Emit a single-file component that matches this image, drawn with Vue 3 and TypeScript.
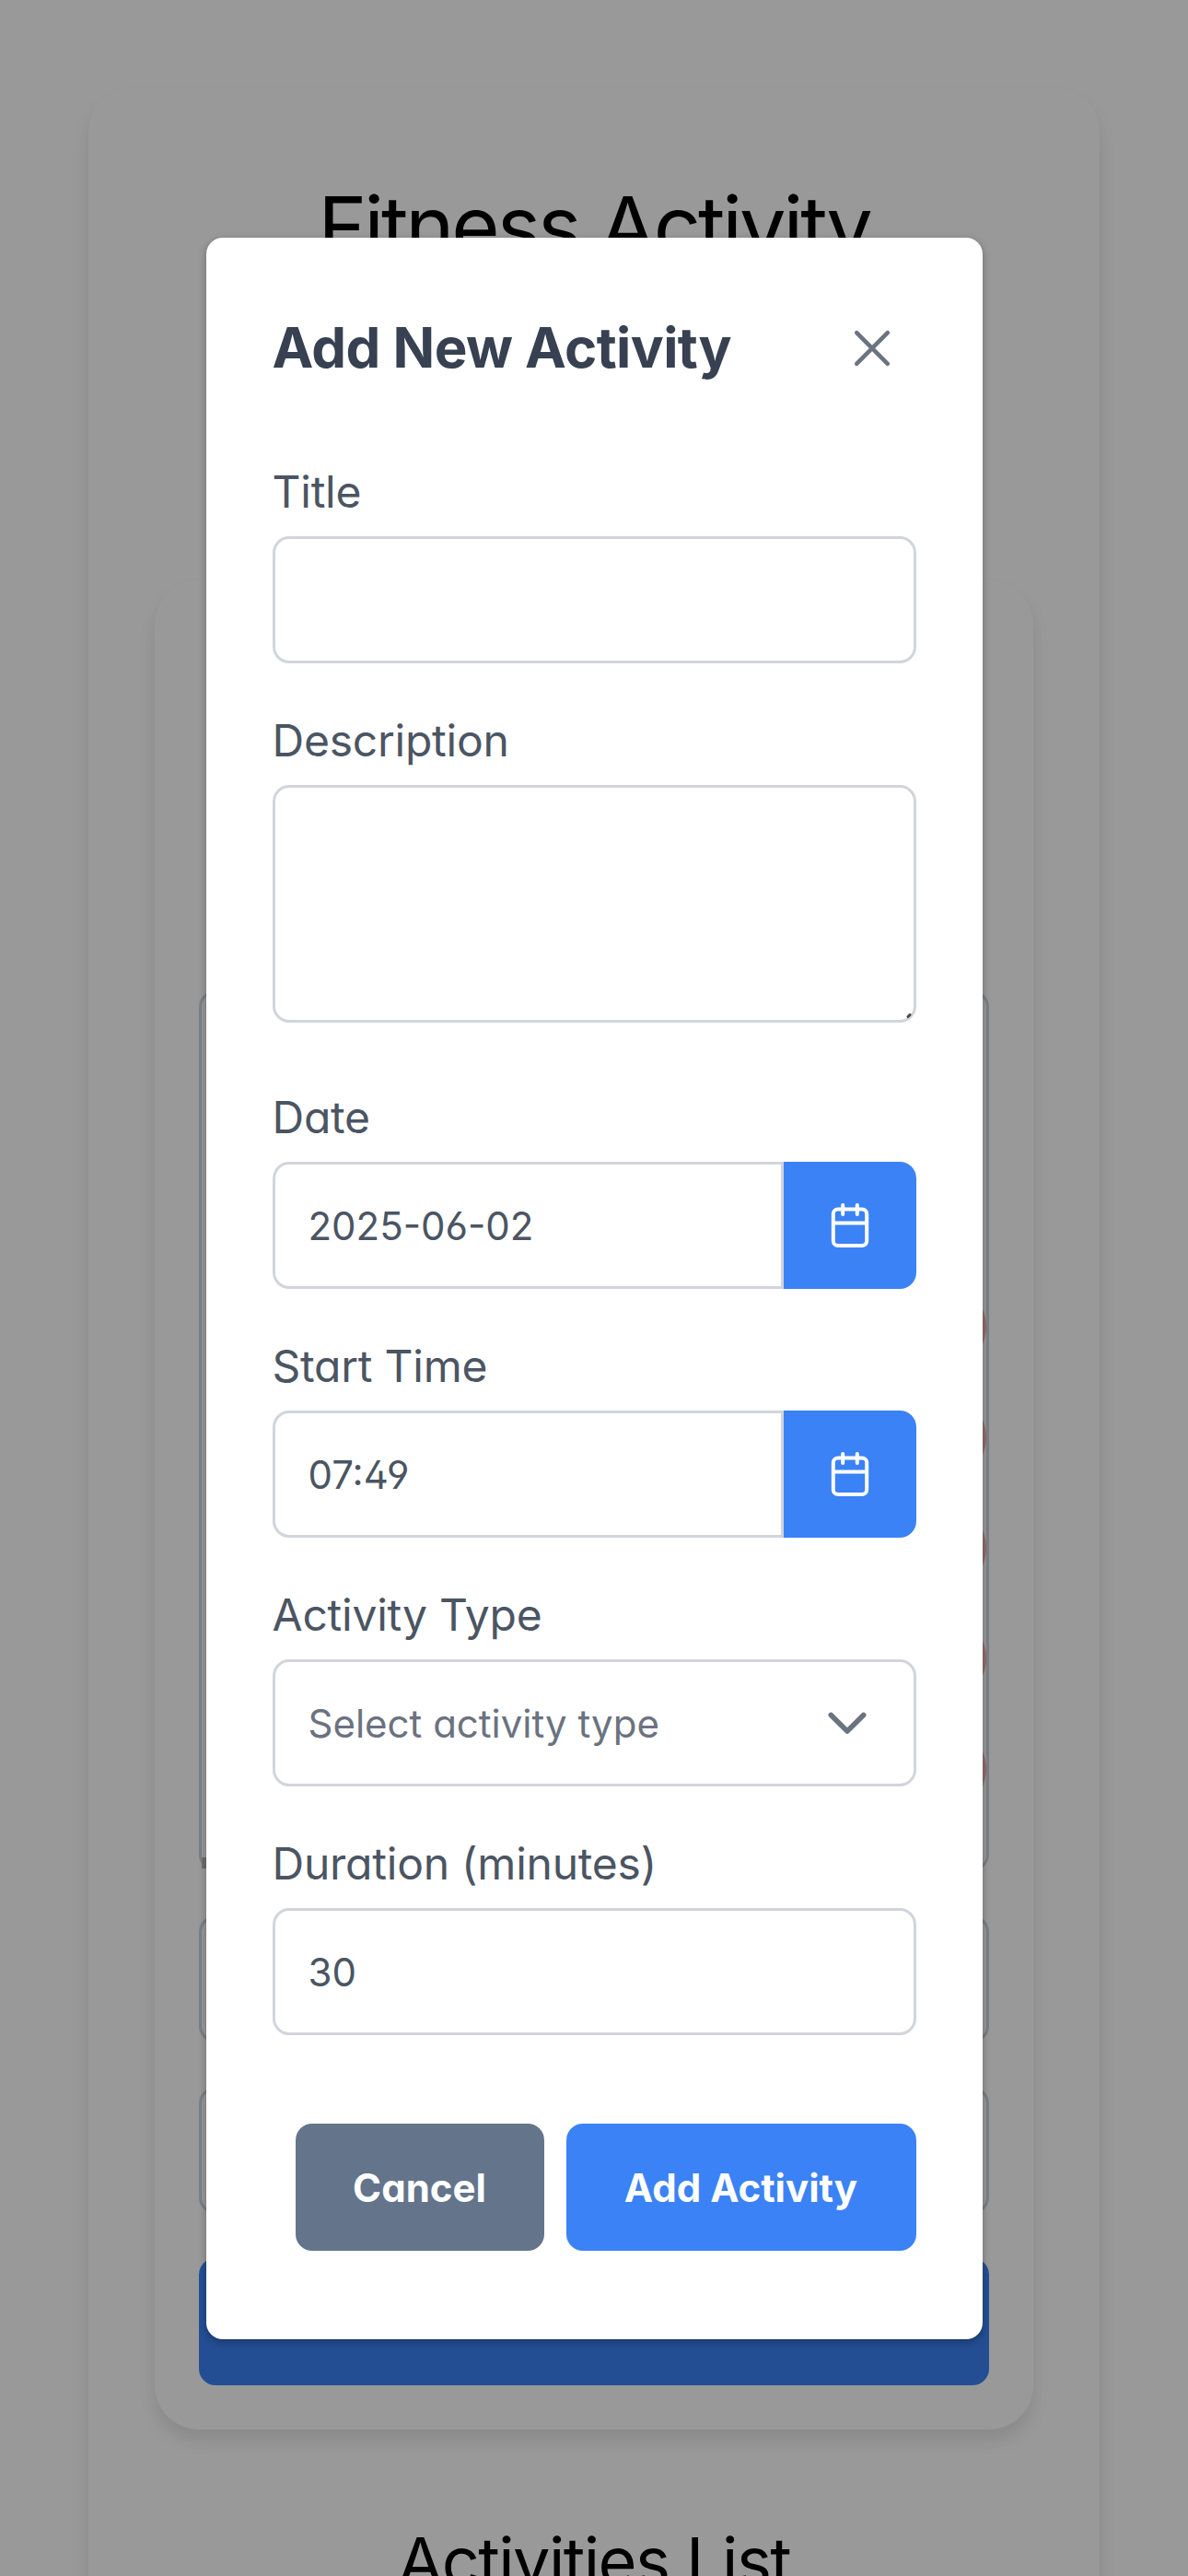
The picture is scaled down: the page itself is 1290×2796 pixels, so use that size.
<script setup lang="ts">
import { ref } from 'vue'

const title = ref('')
const description = ref('')
const dateFields = ref([
  { id: 'date', label: 'Date', value: '2025-06-02' },
  { id: 'start', label: 'Start Time', value: '07:49' },
])
const duration = ref('30')
const markers = [1, 2, 3, 4, 5]
</script>

<template>
  <div class="screen">
    <main class="page">
      <section class="card outer">
        <h1>Fitness Activity</h1>
        <section class="card inner">
          <div class="calendar">
            <i v-for="m in markers" :key="m" class="marker"></i>
            <span class="corner"></span>
          </div>
          <div class="box"></div>
          <div class="box"></div>
          <div class="bar"></div>
        </section>
        <h2>Activities List</h2>
      </section>
    </main>

    <div class="overlay">
      <div class="modal" role="dialog">
        <header class="head">
          <span class="heading">Add New Activity</span>
          <svg class="close" width="48" height="48" viewBox="0 0 48 48" fill="none">
            <path d="M7.2 7.2L40.8 40.8M40.8 7.2L7.2 40.8" stroke="#6b7280" stroke-width="4.5" stroke-linecap="round" />
          </svg>
        </header>

        <div class="field">
          <label>Title</label>
          <input v-model="title" class="control" type="text" />
        </div>
        <div class="field description">
          <label>Description</label>
          <div class="area-wrap">
            <textarea v-model="description" class="control area"></textarea>
            <span class="grip"></span>
          </div>
        </div>
        <div v-for="f in dateFields" :key="f.id" class="field">
          <label>{{ f.label }}</label>
          <div class="picker">
            <input v-model="f.value" class="control joined" type="text" />
            <button class="pick" type="button">
              <svg width="48" height="48" viewBox="0 0 48 48" fill="none" stroke="#fff" stroke-width="4">
                <rect x="5.8" y="6.5" width="36.4" height="39.5" rx="5.2" />
                <path d="M5.8 21.4H42.2" />
                <path d="M16.2 2V12M31.8 2V12" stroke-linecap="round" />
              </svg>
            </button>
          </div>
        </div>
        <div class="field">
          <label>Activity Type</label>
          <div class="control select">
            <span>Select activity type</span>
            <svg width="48" height="48" viewBox="0 0 48 48" fill="none">
              <path d="M6.3 15.4L24 33L41.7 15.4" stroke="#6b7280" stroke-width="5.6" stroke-linecap="round" stroke-linejoin="round" />
            </svg>
          </div>
        </div>
        <div class="field">
          <label>Duration (minutes)</label>
          <input v-model="duration" class="control" type="text" />
        </div>

        <footer class="actions">
          <button class="btn cancel" type="button">Cancel</button>
          <button class="btn add" type="button">Add Activity</button>
        </footer>
      </div>
    </div>
  </div>
</template>

<style>
body {
  margin: 0;
  background: #fff;
}
</style>

<style scoped>
.screen,
.screen * {
  box-sizing: border-box;
}
.screen {
  position: relative;
  width: 1290px;
  height: 2796px;
  overflow: hidden;
  font-family: Inter, 'Liberation Sans', sans-serif;
  font-feature-settings: 'cv02', 'cv03', 'cv04', 'cv11';
}
.page {
  padding: 96px;
}
.card {
  background: #fff;
  border-radius: 48px;
  box-shadow: 0 12px 18px rgba(0, 0, 0, 0.1);
}
.outer {
  width: 1098px;
  height: 2900px;
  padding: 96px 72px;
  color: #000;
}
h1,
h2 {
  margin: 0;
  font-weight: 400;
  text-align: center;
}
h1 {
  height: 438px;
  font-size: 90px;
  line-height: 108px;
  letter-spacing: -3.1px;
}
h2 {
  margin-top: 96px;
  font-size: 72px;
  line-height: 94px;
  letter-spacing: -1.6px;
}
.inner {
  display: flex;
  flex-direction: column;
  justify-content: flex-end;
  gap: 48px;
  width: 954px;
  height: 2007px;
  padding: 48px;
}
.calendar {
  position: relative;
  display: flex;
  flex-direction: column;
  align-items: flex-end;
  gap: 26px;
  height: 956px;
  padding-top: 315px;
  border: 3px solid #cbd5e1;
  border-radius: 18px;
}
.marker {
  width: 94px;
  height: 94px;
  border-radius: 50%;
  background: #f2b5b3;
}
.corner {
  position: absolute;
  left: 0;
  bottom: 0;
  width: 36px;
  height: 12px;
  background: #b8b8b8;
}
.box {
  height: 138px;
  border: 3px solid #cbd5e1;
  border-radius: 18px;
}
.bar {
  height: 138px;
  border-radius: 18px;
  background: #3b82f6;
}
.overlay {
  position: absolute;
  inset: 0;
  display: flex;
  justify-content: center;
  padding-top: 258px;
  background: rgba(0, 0, 0, 0.4);
}
.modal {
  display: flex;
  flex-direction: column;
  gap: 48px;
  width: 843px;
  height: 2281px;
  padding: 0 72px;
  border-radius: 18px;
  background: #fff;
  color: #4b5563;
  box-shadow: 0 3px 9px rgba(0, 0, 0, 0.3);
}
.head {
  display: flex;
  align-items: center;
  justify-content: space-between;
  height: 240px;
  margin-bottom: -48px;
  padding-right: 24px;
}
.heading {
  margin-bottom: 2px;
  color: #374151;
  font-size: 60px;
  font-weight: 700;
  line-height: 72px;
  letter-spacing: -0.57px;
}
.field {
  display: flex;
  flex-direction: column;
  gap: 12px;
}
.description {
  margin-bottom: 19px;
}
label {
  font-size: 48px;
  line-height: 72px;
  letter-spacing: -0.23px;
}
.control {
  width: 100%;
  height: 138px;
  margin: 0;
  padding: 0 36px;
  border: 3px solid #d1d5db;
  border-radius: 18px;
  outline: none;
  background: #fff;
  color: #4b5563;
  font: inherit;
  font-size: 42px;
  font-feature-settings: inherit;
}
.area-wrap {
  position: relative;
  display: flex;
}
.area {
  height: 258px;
  resize: none;
}
.grip {
  position: absolute;
  right: 5px;
  bottom: 6px;
  width: 6px;
  height: 3px;
  border-radius: 2px;
  background: #4a4a4a;
  transform: rotate(-45deg);
}
.picker {
  display: flex;
}
.joined {
  flex: 1;
  min-width: 0;
  border-radius: 18px 0 0 18px;
}
.pick {
  display: flex;
  align-items: center;
  justify-content: center;
  width: 144px;
  height: 138px;
  padding: 0;
  border: 0;
  border-radius: 0 18px 18px 0;
  background: #3b82f6;
}
.select {
  display: flex;
  align-items: center;
  justify-content: space-between;
  padding-right: 48px;
  color: #6b7280;
}
.actions {
  display: flex;
  justify-content: flex-end;
  gap: 24px;
  margin-top: 48px;
}
.btn {
  height: 138px;
  padding: 0;
  border: 0;
  border-radius: 18px;
  color: #fff;
  font: inherit;
  font-size: 42px;
  font-weight: 700;
  font-feature-settings: inherit;
}
.cancel {
  width: 270px;
  background: #64748b;
}
.add {
  width: 380px;
  background: #3b82f6;
}
</style>
